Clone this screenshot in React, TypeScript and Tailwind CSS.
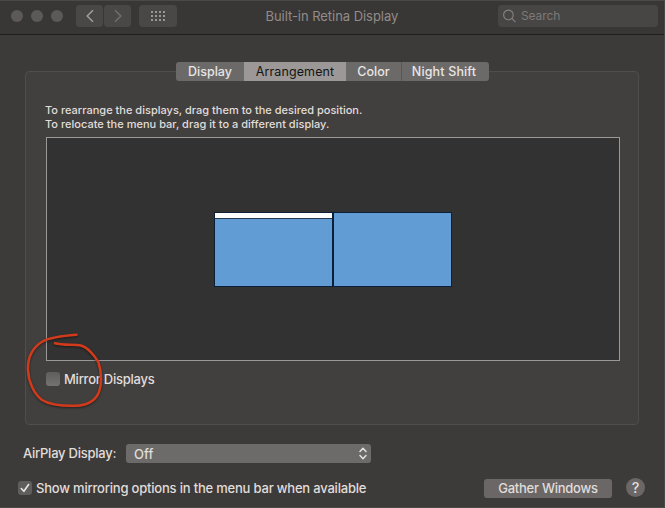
import type { ReactNode } from "react";

function TrafficLights() {
  return (
    <div className="flex gap-2">
      <span className="size-3 rounded-full bg-[#5d5958]" />
      <span className="size-3 rounded-full bg-[#5d5958]" />
      <span className="size-3 rounded-full bg-[#5d5958]" />
    </div>
  );
}

function ToolButton({ className, children }: { className: string; children: ReactNode }) {
  return (
    <button className={`flex h-[22px] items-center justify-center rounded-[4px] bg-[#4a4846] ${className}`}>
      {children}
    </button>
  );
}

function Toolbar() {
  return (
    <header className="flex h-[35px] shrink-0 items-start border-t border-b border-t-[#4b4947] border-b-[#211e1d] bg-[#393735] pt-1 pl-[11px]">
      <div className="mt-[5px]">
        <TrafficLights />
      </div>
      <ToolButton className="ml-[13px] w-[27px]">
        <svg width="8" height="14" viewBox="0 0 8 14" fill="none" stroke="#a19e9c" strokeWidth="1.5">
          <path d="M7 1.2 1.2 7 7 12.8" />
        </svg>
      </ToolButton>
      <ToolButton className="ml-px w-[27px]">
        <svg width="8" height="14" viewBox="0 0 8 14" fill="none" stroke="#716e6c" strokeWidth="1.5">
          <path d="M1 1.2 6.8 7 1 12.8" />
        </svg>
      </ToolButton>
      <ToolButton className="ml-2 w-[38px]">
        <div className="grid grid-cols-4 gap-[2px]">
          {Array.from({ length: 12 }, (_, i) => (
            <span key={i} className="size-[2px] bg-[#9a9795]" />
          ))}
        </div>
      </ToolButton>
      <h1 className="ml-[88.5px] w-[139.5px] text-[13px] leading-[23px] tracking-[-0.05px] whitespace-nowrap text-[#918c8a]">
        Built-in Retina Display
      </h1>
      <div className="ml-[93px] flex h-[22px] w-[160px] items-center rounded-[4px] bg-[#484644] pl-[5px]">
        <svg width="13" height="14" viewBox="0 0 13 14" fill="none" stroke="#858280" strokeWidth="1.1">
          <circle cx="5.4" cy="5.9" r="4.8" />
          <path d="m8.9 9.4 3.6 3.8" />
        </svg>
        <span className="ml-[5px] text-[12px] leading-[22px] tracking-[-0.1px] text-[#7c7977]">Search</span>
      </div>
    </header>
  );
}

function Tabs() {
  return (
    <nav className="mt-[-10px] ml-[150px] flex h-[19px] w-[313px] overflow-hidden rounded-[3px] bg-[#6c6a69] text-center text-[12.5px] leading-[19px] font-medium whitespace-nowrap text-[#e8e5e3]">
      <span className="w-[68px]">Display</span>
      <span className="w-[102px] bg-[#9b9897] font-normal tracking-[0.1px] text-[#151414]">Arrangement</span>
      <span className="w-[55px]">Color</span>
      <span className="w-[88px] border-l border-[#5a5857] pr-[3px] tracking-[0.15px]">Night Shift</span>
    </nav>
  );
}

function Screens() {
  return (
    <div className="flex h-[224px] w-[574px] items-center justify-center border border-[#9a9997] bg-[#323232] pt-px">
      <div className="flex h-[75px] w-[238px]">
        <div className="w-[119px] border border-[#0b2037] bg-[#629cd4]">
          <div className="h-[6px] border-b border-[#25384d] bg-white" />
        </div>
        <div className="w-[119px] border border-[#0b2037] bg-[#629cd4]" />
      </div>
    </div>
  );
}

function Scribble() {
  return (
    <svg
      className="pointer-events-none absolute top-[328px] left-[20px] drop-shadow-[0_1px_1px_rgba(0,0,0,0.5)]"
      width="90"
      height="85"
      viewBox="20 328 90 85"
      fill="none"
      stroke="#d23a1c"
      strokeWidth="2.5"
      strokeLinecap="round"
      strokeLinejoin="round"
    >
      <path d="M76.500 334.800C63 335.800 50 337.500 42.500 341.500C32 348 27.500 358 28 370C28.500 382 34 394 42 400C50 405 63 406 75 405.800C87 405.500 95 402 99 392C102 384 101.500 372 98.500 362.500C95 356 88 347.500 81 345.500C74 344.300 63 345.500 55 343.300" />
    </svg>
  );
}

export default function App() {
  return (
    <div className="relative flex h-[508px] w-[665px] flex-col overflow-hidden border-r border-b border-[#4b4948] bg-[#3d3b39] font-['Inter','Liberation_Sans',sans-serif] text-[#e0dddb]">
      <Toolbar />
      <main className="mt-9 ml-[25px] h-[354px] w-[614px] shrink-0 rounded-[4px] border border-[#504e4c] bg-[#42403e]">
        <Tabs />
        <p className="mt-[22px] ml-[19px] text-[11px] leading-[14px] font-medium whitespace-nowrap">
          <span className="tracking-[0.01px]">To rearrange the displays, drag them to the desired position.</span>
          <br />
          <span className="tracking-[0.02px]">To relocate the menu bar, drag it to a different display.</span>
        </p>
        <div className="mt-[6px] ml-5">
          <Screens />
        </div>
        <label className="mt-[10px] ml-5 flex items-center text-[13px] leading-4 font-medium">
          <span className="size-[14px] rounded-[3px] bg-linear-to-b from-[#605e5d] to-[#757371]" />
          <span className="ml-1 tracking-[-0.24px]">Mirror Displays</span>
        </label>
      </main>
      <div className="mt-[19px] flex h-[19px] shrink-0 items-center pl-[23px] text-[13px] leading-[19px] font-medium tracking-[-0.25px] whitespace-nowrap">
        <span className="w-[103px]">AirPlay Display:</span>
        <div className="flex h-[19px] w-[245px] items-center justify-between rounded-[3px] bg-[#6c6b69] pr-1 pl-2">
          <span className="pt-px tracking-normal">Off</span>
          <svg width="8" height="13" viewBox="0 0 8 13" fill="none" stroke="#e4e2e0" strokeWidth="1.5" strokeLinecap="round" strokeLinejoin="round">
            <path d="M1 4.500 4 1.300 7 4.500M1 8.500 4 11.700 7 8.500" />
          </svg>
        </div>
      </div>
      <footer className="mt-4 flex h-[19px] shrink-0 items-center pl-[18px] text-[13px] leading-[19px] font-medium whitespace-nowrap">
        <span className="mb-[2px] flex size-[14px] items-center justify-center rounded-[3px] bg-[#605e5c]">
          <svg width="10" height="10" viewBox="0 0 10 10" fill="none" stroke="#e9e7e5" strokeWidth="1.6" strokeLinecap="round" strokeLinejoin="round">
            <path d="M1.300 5.500 3.900 8.300 8.600 1.500" />
          </svg>
        </span>
        <span className="ml-1 w-[448px] tracking-[-0.2px]">Show mirroring options in the menu bar when available</span>
        <button className="h-[19px] w-[128px] rounded-[3px] bg-[#6b6766] text-center tracking-[-0.25px]">Gather Windows</button>
        <button className="mb-[2px] ml-[14px] size-[19px] shrink-0 rounded-full bg-[#6b6766] text-[14.5px] leading-[19px]">?</button>
      </footer>
      <Scribble />
    </div>
  );
}
